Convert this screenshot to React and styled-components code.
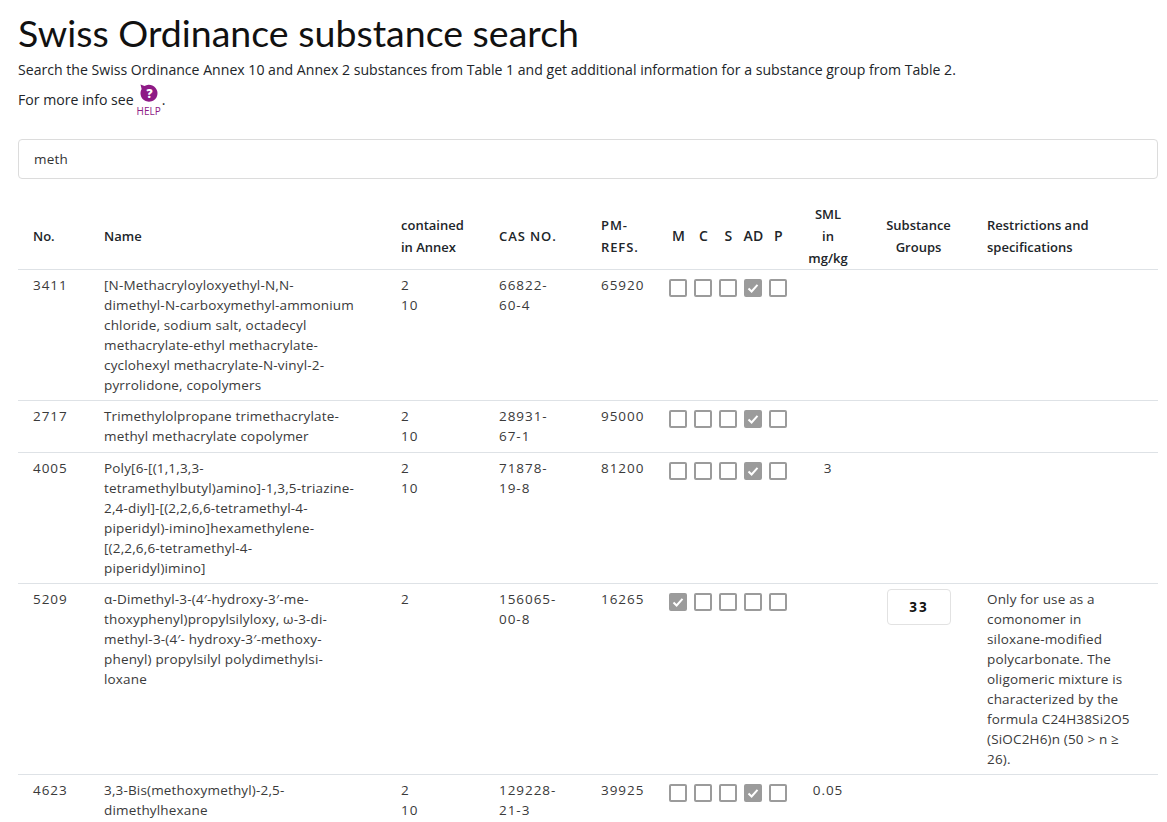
import React from 'react';
import styled, { createGlobalStyle } from 'styled-components';

const GlobalStyle = createGlobalStyle`
  html, body { margin: 0; padding: 0; background: #fff; }
  body { font-family: "Open Sans", "Noto Sans", sans-serif; color: #212529; }
`;

const Page = styled.div`
  padding: 0 9px 0 18px;
  height: 822px;
  overflow: hidden;
`;

const Title = styled.h1`
  margin: 0;
  padding-top: 10px;
  font-family: Lato, "Open Sans", sans-serif;
  font-size: 37.5px;
  line-height: 46px;
  font-weight: 400;
  color: #111;
`;

const Intro = styled.p`
  margin: 4px 0 0;
  font-size: 14.1px;
  line-height: 20px;
`;

const HelpLine = styled.p`
  margin: 0;
  padding-top: 3px;
  font-size: 14.1px;
  line-height: 20px;
  display: flex;
  align-items: flex-start;
  height: 42px;
  box-sizing: border-box;
`;

const HelpText = styled.span`
  padding-top: 7px;
`;

const HelpLink = styled.a`
  display: flex;
  flex-direction: column;
  align-items: center;
  gap: 3px;
  width: 26px;
  margin: 0 0 0 2px;
  color: #8e1a86;
  font-size: 10px;
  line-height: 11px;
  text-decoration: none;
`;

const Dot = styled.span`
  padding-top: 7px;
`;

const Search = styled.input`
  display: block;
  box-sizing: border-box;
  width: 100%;
  height: 40px;
  margin-top: 17px;
  padding: 0 15px;
  border: 1px solid #dcdcdc;
  border-radius: 4px;
  font: inherit;
  font-size: 13.5px;
  letter-spacing: 0.2px;
  color: #333;
  outline: none;
`;

const Table = styled.table`
  width: 1140px;
  margin-top: 18px;
  border-collapse: collapse;
  table-layout: fixed;
  font-size: 13.5px;
  line-height: 20px;
  letter-spacing: 0.17px;
`;

const Th = styled.th`
  padding: 6px 0 0 15px;
  text-align: ${({ $center }) => ($center ? 'center' : 'left')};
  ${({ $center }) => $center && 'padding-right: 15px;'}
  vertical-align: middle;
  font-size: 13px;
  line-height: 22px;
  font-weight: 600;
  letter-spacing: ${({ $wide }) => ($wide ? '0.9px' : '0')};
  color: #212529;
  border-bottom: 1px solid #dee2e6;
`;

const Td = styled.td`
  padding: 5px 0 5.25px 15px;
  text-align: ${({ $center }) => ($center ? 'center' : 'left')};
  ${({ $center }) => $center && 'padding-right: 15px;'}
  vertical-align: top;
  color: #3a3a3a;
  border-bottom: 1px solid #dee2e6;
  white-space: nowrap;
  letter-spacing: ${({ $num }) => ($num ? '0.95px' : 'inherit')};
`;

const FlagHeads = styled.div`
  display: grid;
  grid-template-columns: repeat(5, 25px);
  text-align: center;
  font-size: 14px;
  letter-spacing: 0.2px;
`;

const Flags = styled.div`
  display: grid;
  grid-template-columns: repeat(5, 25px);
  justify-items: center;
  padding-top: 4px;
  margin-left: -1px;
`;

const Box = styled.span`
  display: flex;
  align-items: center;
  justify-content: center;
  box-sizing: border-box;
  width: 18px;
  height: 18px;
  border: 2px solid #9b9b9b;
  border-radius: 2px;
  background: ${({ $on }) => ($on ? '#9b9b9b' : '#fff')};
`;

const GroupButton = styled.button`
  display: block;
  box-sizing: border-box;
  width: 64px;
  height: 36px;
  margin: 0 0 0 7px;
  padding: 0;
  background: #fff;
  border: 1px solid #e2e2e2;
  border-radius: 4px;
  font: inherit;
  font-size: 13.5px;
  font-weight: 700;
  letter-spacing: 2px;
  color: #111;
`;

const Check = () => (
  <svg width="14" height="14" viewBox="0 0 14 14">
    <path d="M2.5 7.5 L5.6 10.5 L11.5 3.8" fill="none" stroke="#fff" strokeWidth="2" />
  </svg>
);

const HelpIcon = () => (
  <svg width="20" height="20" viewBox="0 0 20 20">
    <path d="M1.5 1.5 L5.5 3 A8.5 8.5 0 1 1 2.6 6 Z" fill="#8e1a86" />
    <text x="10.5" y="14.5" textAnchor="middle" fontSize="12" fontWeight="800" fontFamily="Open Sans" fill="#fff">?</text>
  </svg>
);

const rows = [
  {
    no: '3411',
    name: ['[N-Methacryloyloxyethyl-N,N-', 'dimethyl-N-carboxymethyl-ammonium', 'chloride, sodium salt, octadecyl', 'methacrylate-ethyl methacrylate-', 'cyclohexyl methacrylate-N-vinyl-2-', 'pyrrolidone, copolymers'],
    annex: ['2', '10'], cas: ['66822-', '60-4'], pm: '65920', flag: 3,
  },
  {
    no: '2717',
    name: ['Trimethylolpropane trimethacrylate-', 'methyl methacrylate copolymer'],
    annex: ['2', '10'], cas: ['28931-', '67-1'], pm: '95000', flag: 3,
  },
  {
    no: '4005',
    name: ['Poly[6-[(1,1,3,3-', 'tetramethylbutyl)amino]-1,3,5-triazine-', '2,4-diyl]-[(2,2,6,6-tetramethyl-4-', 'piperidyl)-imino]hexamethylene-', '[(2,2,6,6-tetramethyl-4-', 'piperidyl)imino]'],
    annex: ['2', '10'], cas: ['71878-', '19-8'], pm: '81200', flag: 3, sml: '3',
  },
  {
    no: '5209',
    name: ['α-Dimethyl-3-(4′-hydroxy-3′-me-', 'thoxyphenyl)propylsilyloxy, ω-3-di-', 'methyl-3-(4′- hydroxy-3′-methoxy-', 'phenyl) propylsilyl polydimethylsi-', 'loxane'],
    annex: ['2'], cas: ['156065-', '00-8'], pm: '16265', flag: 0, group: '33',
    notes: ['Only for use as a', 'comonomer in', 'siloxane-modified', 'polycarbonate. The', 'oligomeric mixture is', 'characterized by the', 'formula C24H38Si2O5', '(SiOC2H6)n (50 > n ≥', '26).'],
  },
  {
    no: '4623',
    name: ['3,3-Bis(methoxymethyl)-2,5-', 'dimethylhexane'],
    annex: ['2', '10'], cas: ['129228-', '21-3'], pm: '39925', flag: 3, sml: '0.05',
  },
];

const Lines = ({ items = [] }) =>
  items.map((line, i) => (
    <React.Fragment key={i}>
      {line}
      {i < items.length - 1 && <br />}
    </React.Fragment>
  ));

export default function App() {
  return (
    <Page>
      <GlobalStyle />
      <Title>Swiss Ordinance substance search</Title>
      <Intro>
        Search the Swiss Ordinance Annex 10 and Annex 2 substances from Table 1 and get additional information for a substance group from Table 2.
      </Intro>
      <HelpLine>
        <HelpText>For more info see</HelpText>
        <HelpLink href="#">
          <HelpIcon />
          HELP
        </HelpLink>
        <Dot>.</Dot>
      </HelpLine>
      <Search defaultValue="meth" />
      <Table>
        <colgroup>
          <col width="71" />
          <col width="297" />
          <col width="98" />
          <col width="102" />
          <col width="65" />
          <col width="140" />
          <col width="74" />
          <col width="107" />
          <col width="186" />
        </colgroup>
        <thead>
          <tr>
            <Th>No.</Th>
            <Th>Name</Th>
            <Th>contained<br />in Annex</Th>
            <Th $wide>CAS NO.</Th>
            <Th $wide>PM-<br />REFS.</Th>
            <Th>
              <FlagHeads>
                <span>M</span><span>C</span><span>S</span><span>AD</span><span>P</span>
              </FlagHeads>
            </Th>
            <Th $center>SML<br />in<br />mg/kg</Th>
            <Th $center>Substance<br />Groups</Th>
            <Th>Restrictions and<br />specifications</Th>
          </tr>
        </thead>
        <tbody>
          {rows.map((row) => (
            <tr key={row.no}>
              <Td $num>{row.no}</Td>
              <Td><Lines items={row.name} /></Td>
              <Td $num><Lines items={row.annex} /></Td>
              <Td $num><Lines items={row.cas} /></Td>
              <Td $num>{row.pm}</Td>
              <Td>
                <Flags>
                  {[0, 1, 2, 3, 4].map((i) => (
                    <Box key={i} $on={i === row.flag}>{i === row.flag && <Check />}</Box>
                  ))}
                </Flags>
              </Td>
              <Td $center $num>{row.sml}</Td>
              <Td>{row.group && <GroupButton>{row.group}</GroupButton>}</Td>
              <Td><Lines items={row.notes} /></Td>
            </tr>
          ))}
        </tbody>
      </Table>
    </Page>
  );
}
